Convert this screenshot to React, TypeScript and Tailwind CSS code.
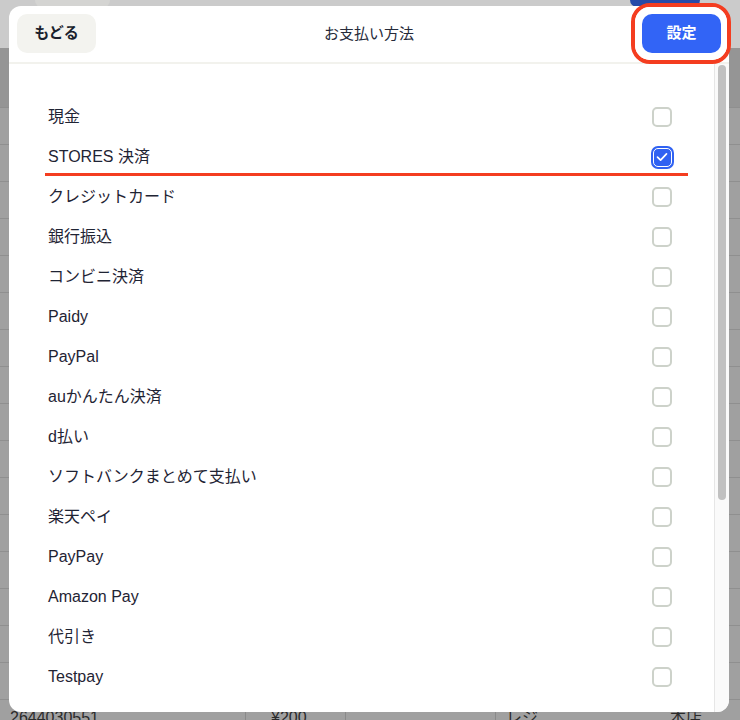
import React from "react";

const items: { label: string; checked?: boolean }[] = [
  { label: "現金" },
  { label: "STORES 決済", checked: true },
  { label: "クレジットカード" },
  { label: "銀行振込" },
  { label: "コンビニ決済" },
  { label: "Paidy" },
  { label: "PayPal" },
  { label: "auかんたん決済" },
  { label: "d払い" },
  { label: "ソフトバンクまとめて支払い" },
  { label: "楽天ペイ" },
  { label: "PayPay" },
  { label: "Amazon Pay" },
  { label: "代引き" },
  { label: "Testpay" },
];

function Checkbox({ checked }: { checked?: boolean }) {
  if (checked) {
    return (
      <div className="w-[23px] h-[23px] rounded-[7px] bg-[#3062f2] p-[2px]">
        <div className="w-full h-full rounded-[5px] border-[1.5px] border-white flex items-center justify-center">
          <svg width="12" height="10" viewBox="0 0 12 10" fill="none">
            <path d="M1.5 5.2 L4.6 8.2 L10.5 1.8" stroke="white" strokeWidth="1.7" strokeLinecap="round" strokeLinejoin="round" />
          </svg>
        </div>
      </div>
    );
  }
  return <div className="w-[20px] h-[20px] rounded-[5px] border-2 border-[#cdd2ca] bg-white" />;
}

export default function App() {
  const rows = Array.from({ length: 17 });
  return (
    <div
      className="relative w-[740px] h-[720px] overflow-hidden bg-[#9f9f9f]"
      style={{ fontFamily: '"Liberation Sans", "Noto Sans CJK JP", sans-serif' }}
    >
      {/* dimmed page behind the dialog */}
      <div className="flex flex-col">
        <div className="h-[48px] bg-[#cbcbcb] flex items-start justify-between pl-[35px] pr-[40px]">
          <div className="w-[75px] h-[8px] rounded-b-[8px] bg-[#d4d4d2]" />
          <div className="w-[70px] h-[7px] rounded-b-[10px] bg-[#274aa8]" />
        </div>
        <div className="h-[59px] bg-[#959595]" />
        {rows.map((_, i) => (
          <div key={i} className="h-[37px] border-t border-[#8f8f8f] bg-[#a0a0a0] text-[16px] text-[#2b2b2b]">
            {i === 16 ? (
              <div className="flex items-start w-full h-full pt-[6px]">
                <span className="w-[245px] pl-[10px] leading-[24px]">2644030551</span>
                <span className="w-[100px] pl-[25px] border-l border-[#8a8a8a] leading-[24px]">¥200</span>
                <span className="w-[150px] h-[24px] border-l border-[#8a8a8a]" />
                <span className="w-[140px] pl-[10px] border-l border-[#8a8a8a] leading-[24px]">レジ</span>
                <span className="pl-[35px] leading-[24px]">本店</span>
              </div>
            ) : null}
          </div>
        ))}
      </div>

      {/* dialog */}
      <div className="absolute left-[9px] top-[6px] w-[720px] h-[706px] bg-white rounded-[12px] overflow-hidden flex flex-col text-[#1f2434]">
        <div className="relative h-[56px] flex items-center justify-between px-[8px] pb-[1px] shrink-0">
          <button className="w-[79px] h-[39px] rounded-[10px] bg-[#f3f3ef] text-[15px] font-bold text-[#1a1f2d]">もどる</button>
          <div className="absolute left-0 right-0 top-0 h-[56px] flex items-center justify-center pointer-events-none text-[15px] text-[#262b3a]">
            お支払い方法
          </div>
          <button className="w-[79px] h-[39px] rounded-[10px] bg-[#3264f6] text-[15px] font-bold text-white">設定</button>
        </div>
        <div className="h-[2px] bg-[#f2f2ed] shrink-0" />
        <div className="flex-1 flex overflow-hidden">
          <div className="flex-1 pt-[33px] pl-[39px] pr-[40px]">
            {items.map((it) => (
              <div key={it.label} className="h-[40px] flex items-center justify-between text-[16px]">
                <span>{it.label}</span>
                <div className="w-[24px] flex justify-center">
                  <Checkbox checked={it.checked} />
                </div>
              </div>
            ))}
          </div>
          <div className="w-[15px] shrink-0 bg-[#fafafa] border-l border-[#e6e6e6] pt-[1px] pl-[3px]">
            <div className="w-[8px] h-[435px] rounded-full bg-[#c1c1c1]" />
          </div>
        </div>
      </div>

      {/* annotations */}
      <div className="absolute left-[631px] top-[3px] w-[100px] h-[61px] rounded-[19px] border-[4px] border-[#f43d20]">
        <div className="w-full h-full rounded-[15px] border-2 border-white" />
      </div>
      <div className="absolute left-[45px] top-[173px] w-[643px] h-[3px] bg-[#f43d20]" />
    </div>
  );
}
